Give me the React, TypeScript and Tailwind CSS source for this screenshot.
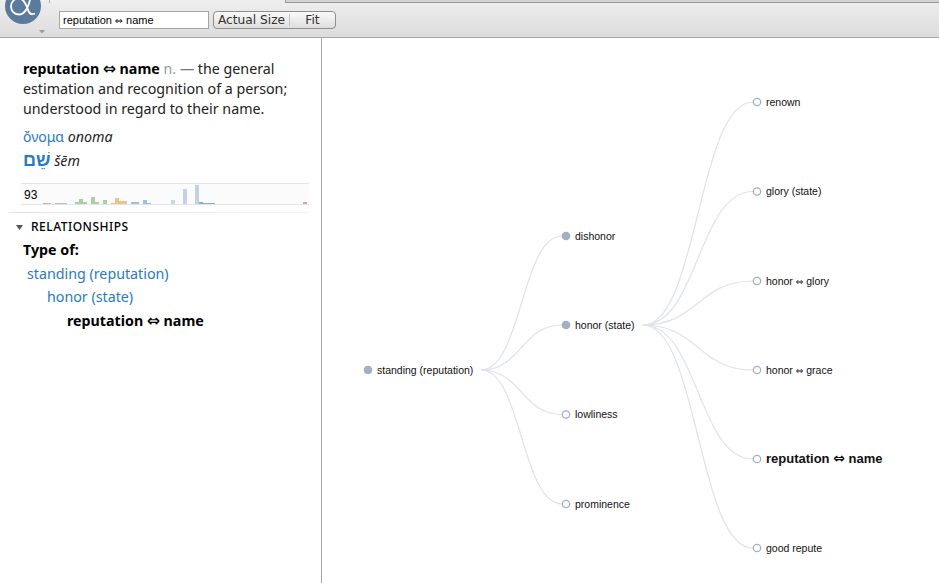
import React from 'react';

const sans = { fontFamily: '"Noto Sans", sans-serif' };

// x, width, height, colour of the occurrence chart bars
const bars: [number, number, number, string][] = [
  [43, 8, 1, '#b9b6d6'], [55, 8, 1, '#b9b6d6'], [63, 4, 1, '#a9cfa9'], [75, 4, 2, '#a9cfa9'], [79, 4, 5, '#a9cfa9'],
  [83, 4, 2, '#a9cfa9'], [91, 4, 7, '#a9cfa9'], [95, 4, 2, '#a9cfa9'], [103, 4, 4, '#a9cfa9'], [111, 4, 1, '#e8c58c'],
  [115, 4, 6, '#e8c58c'], [119, 8, 3, '#e8c58c'], [131, 8, 2, '#a8bcd6'], [143, 4, 4, '#a8bcd6'], [147, 4, 1, '#a8bcd6'],
  [171, 4, 4, '#c8d6e6'], [183, 4, 15, '#c3d2e2'], [195, 4, 19, '#c3d2e2'], [199, 4, 2, '#8fa8d4'], [203, 12, 1, '#8fa8d4'],
  [303, 4, 2, '#cda4c6'],
];

type Node = { x: number; y: number; label: string; filled?: boolean; bold?: boolean };

const nodes: Node[] = [
  { x: 368, y: 370, label: 'standing (reputation)', filled: true },
  { x: 566, y: 236, label: 'dishonor', filled: true },
  { x: 566, y: 325, label: 'honor (state)', filled: true },
  { x: 566, y: 414.500, label: 'lowliness' },
  { x: 566, y: 504, label: 'prominence' },
  { x: 757, y: 102, label: 'renown' },
  { x: 757, y: 191.500, label: 'glory (state)' },
  { x: 757, y: 281, label: 'honor ⇔ glory' },
  { x: 757, y: 370, label: 'honor ⇔ grace' },
  { x: 757, y: 459, label: 'reputation ⇔ name', bold: true },
  { x: 757, y: 548, label: 'good repute' },
];

// elbow curve from a parent's right edge to a child's circle
const link = (x0: number, y0: number, x1: number, y1: number) => {
  const mx = (x0 + x1) / 2;
  return `M${x0} ${y0}C${mx} ${y0} ${mx} ${y1} ${x1} ${y1}`;
};

const links = [
  ...nodes.slice(1, 5).map((n) => link(481, 370, n.x - 4, n.y)),
  ...nodes.slice(5).map((n) => link(643, 325, n.x - 4, n.y)),
];

const Arrow = () => <span className="font-['DejaVu_Sans',sans-serif] text-[15.500px] leading-none">⇔</span>;

export default function App() {
  return (
    <div className="w-[939px] h-[583px] overflow-hidden bg-white flex flex-col text-black" style={sans}>
      <div className="relative h-[38px] shrink-0 flex items-start border-b border-[#a8a8a8] bg-gradient-to-b from-[#efefef] to-[#dcdcdc]">
        <div className="absolute left-[285px] right-0 top-0 h-[3px] border-b border-l border-[#9a9a9a] bg-[#d4d4d4]" />
        <div className="absolute left-[49px] top-0 h-[3px] w-px bg-[#b0b0b0]" />
        <div className="relative w-[59px] h-[37px] shrink-0 overflow-hidden">
          <svg width="59" height="37" viewBox="0 0 59 37">
            <circle cx="23" cy="6" r="18" fill="#5b7a9c" />
            <path d="M30 0C28 8 25 14.500 19 14.500C14 14.500 11 11 11 6.500C11 2 14 -1.500 19 -1.500C25 -1.500 27 8 29 12C30 14 32 14.800 35 13.500" fill="none" stroke="#fff" strokeWidth="1.800" />
            <path d="M39 30h6l-3 3.500z" fill="#9b9b9b" />
          </svg>
        </div>
        <div className="mt-[11px] w-[150px] h-[18px] border border-[#a5a5a5] bg-white px-[3px] text-[11px] leading-[16px] font-['Liberation_Sans',sans-serif]">
          reputation <span className="font-['DejaVu_Sans',sans-serif] text-[9.500px]">⇔</span> name
        </div>
        <div className="ml-[4px] mt-[11px] w-[123px] h-[18px] flex items-center border border-[#8e8e8e] rounded-[4px] bg-gradient-to-b from-[#fafafa] to-[#dedede] text-[12.200px] leading-none text-[#333] font-['DejaVu_Sans',sans-serif]">
          <span className="w-[76px] text-center border-r border-[#c4c4c4]">Actual Size</span>
          <span className="flex-1 text-center">Fit</span>
        </div>
      </div>
      <div className="flex flex-1 min-h-0">
        <div className="w-[322px] shrink-0 border-r border-[#a8a8a8] flex flex-col pl-[9px]">
          <div className="pl-[14px] pr-[20px] pt-[21px] text-[14.250px] leading-[20px] text-[#222]">
            <p>
              <b className="font-bold text-black">reputation <Arrow /> name</b> <span className="text-[#9a9a9a]">n.</span>{' '}
              <span className="text-[#777]">—</span> the general estimation and recognition of a person; understood in regard to their name.
            </p>
            <p className="mt-[6px] leading-[23px]">
              <span className="text-[#2a7ac0] text-[14px]">ὄνομα</span> <i>onoma</i>
            </p>
            <p className="leading-[23px]">
              <span className="text-[#2a7ac0] text-[18px] font-semibold">שֵׁם</span> <i>šēm</i>
            </p>
          </div>
          <div className="relative mt-[11px] h-[22px] ml-[12px] mr-[12px] border-y border-[#e4e4e4] bg-[#fbfbfb]">
            <span className="absolute left-[3px] top-[4px] text-[12px] leading-[15px] font-['Liberation_Sans',sans-serif]">93</span>
            {bars.map(([x, w, h, color]) => (
              <div key={x} className="absolute bottom-0" style={{ left: x - 21, width: w, height: h, background: color }} />
            ))}
          </div>
          <div className="mt-[7px] mr-[12px] h-px bg-gradient-to-r from-[#e0e0e0] to-[#f4f4f4]" />
          <div className="flex items-center h-[25px] pt-[3px]">
            <svg width="7" height="5" viewBox="0 0 7 5" className="ml-[7px]"><path d="M0 0h7L3.500 5z" fill="#555" /></svg>
            <span className="ml-[8px] text-[12px] font-medium tracking-[0.5px]">RELATIONSHIPS</span>
          </div>
          <div className="text-[14.250px] leading-[23.700px]">
            <div className="pl-[14px] font-bold">Type of:</div>
            <div className="pl-[18px] text-[#2a7ac0]">standing (reputation)</div>
            <div className="pl-[38px] text-[#2a7ac0]">honor (state)</div>
            <div className="pl-[58px] font-bold">reputation <Arrow /> name</div>
          </div>
        </div>
        <div className="flex-1 min-w-0">
          <svg width="617" height="545" viewBox="322 38 617 545" className="block font-['Liberation_Sans',sans-serif]">
            {links.map((d, i) => (
              <path key={i} d={d} fill="none" stroke="#dfe3ea" strokeWidth="1.200" />
            ))}
            {nodes.map((n) => {
              const [before, after] = n.label.split('⇔');
              return (
                <g key={n.label}>
                  <circle cx={n.x} cy={n.y} r="3.700" fill={n.filled ? '#a3afc2' : '#fff'} stroke="#a3afc2" strokeWidth="1.300" />
                  <text x={n.x + 9} y={n.y + 3.500} fontSize={n.bold ? 13 : 10.500} fontWeight={n.bold ? 700 : 400} fill="#111">
                    {before}
                    {after !== undefined && <tspan fontFamily="'DejaVu Sans', sans-serif" fontSize={n.bold ? 14 : 9}>⇔</tspan>}
                    {after}
                  </text>
                </g>
              );
            })}
          </svg>
        </div>
      </div>
    </div>
  );
}
